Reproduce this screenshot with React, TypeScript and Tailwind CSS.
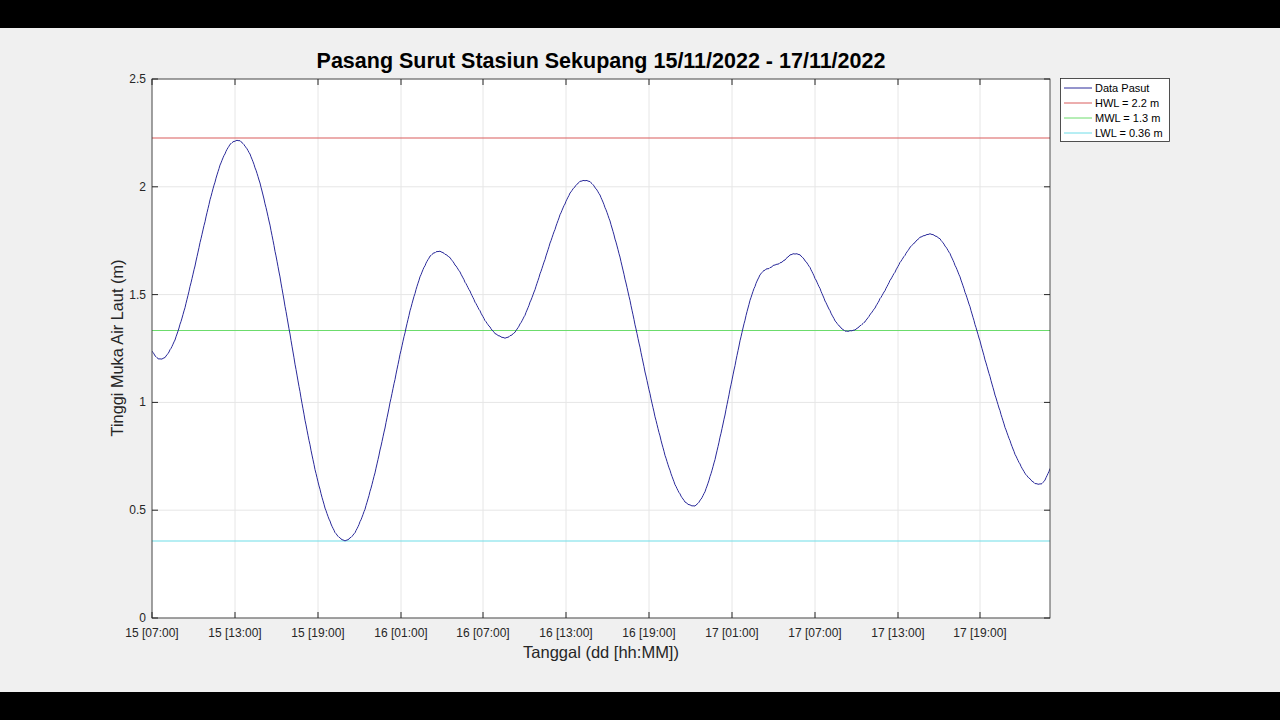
import React from "react";

const ext: [number, number][] = [
  [148, 1.25], [160, 1.2], [237, 2.215], [345, 0.36], [438, 1.7], [505, 1.3],
  [585, 2.03], [693, 0.52], [768, 1.62], [776, 1.64], [795, 1.69], [848, 1.33],
  [930, 1.78], [1040, 0.62], [1056, 0.72],
];
const Y = (v: number) => 618 - v * 215.6;

function curve() {
  const pts: string[] = [];
  for (let i = 0; i < ext.length - 1; i++) {
    const [x0, v0] = ext[i];
    const [x1, v1] = ext[i + 1];
    for (let x = Math.ceil(x0); x < x1; x += 1) {
      const t = (x - x0) / (x1 - x0);
      const s = (1 - Math.cos(Math.PI * t)) / 2;
      const jitter = ((x * 7919) % 5 === 0 ? 0.6 : 0) * (x % 2 ? 1 : -1);
      pts.push(`${x},${(Y(v0 + (v1 - v0) * s) + jitter).toFixed(1)}`);
    }
  }
  return "M" + pts.join("L");
}

const xt = [152, 235, 318, 401, 483, 566, 649, 732, 815, 898, 980];
const xl = ["15 [07:00]", "15 [13:00]", "15 [19:00]", "16 [01:00]", "16 [07:00]", "16 [13:00]", "16 [19:00]", "17 [01:00]", "17 [07:00]", "17 [13:00]", "17 [19:00]"];
const yv = [0, 0.5, 1, 1.5, 2, 2.5];

export default function App() {
  return (
    <div className="w-[1280px] h-[720px] bg-black flex flex-col" style={{ fontFamily: "Liberation Sans, Arial, sans-serif" }}>
      <div className="h-[28px]" />
      <div className="h-[664px] bg-[#f0f0f0]">
        <svg width="1280" height="664" viewBox="0 28 1280 664">
          <defs>
            <clipPath id="c"><rect x="152" y="79" width="898" height="539" /></clipPath>
          </defs>
          <rect x="152" y="79" width="898" height="539" fill="#fff" />
          {xt.map((x) => <line key={x} x1={x} x2={x} y1={79} y2={618} stroke="#e6e6e6" />)}
          {yv.map((v) => <line key={v} x1={152} x2={1050} y1={Y(v)} y2={Y(v)} stroke="#e6e6e6" />)}
          <g clipPath="url(#c)">
            <line x1={152} x2={1050} y1={138} y2={138} stroke="#d95c5c" strokeWidth="1.2" />
            <line x1={152} x2={1050} y1={330.5} y2={330.5} stroke="#6cdc6c" strokeWidth="1.2" />
            <line x1={152} x2={1050} y1={541} y2={541} stroke="#6fdde8" strokeWidth="1.2" />
            <path d={curve()} fill="none" stroke="#2a2a9a" strokeWidth="1" />
          </g>
          <rect x="152" y="79" width="898" height="539" fill="none" stroke="#262626" strokeWidth="0.8" />
          {xt.map((x, i) => (
            <g key={x}>
              <line x1={x} x2={x} y1={618} y2={612} stroke="#262626" />
              <line x1={x} x2={x} y1={79} y2={85} stroke="#262626" />
              <text x={x} y={637} fontSize="12" textAnchor="middle" fill="#262626">{xl[i]}</text>
            </g>
          ))}
          {yv.map((v) => (
            <g key={v}>
              <line x1={152} x2={158} y1={Y(v)} y2={Y(v)} stroke="#262626" />
              <line x1={1044} x2={1050} y1={Y(v)} y2={Y(v)} stroke="#262626" />
              <text x={146} y={Y(v) + 4} fontSize="12" textAnchor="end" fill="#262626">{v === 0 ? "0" : String(v)}</text>
            </g>
          ))}
          <text x={601} y={68} fontSize="21.5" fontWeight="bold" textAnchor="middle" fill="#000">Pasang Surut Stasiun Sekupang 15/11/2022 - 17/11/2022</text>
          <text x={601} y={658} fontSize="16.5" textAnchor="middle" fill="#262626">Tanggal (dd [hh:MM])</text>
          <text transform="translate(123 348) rotate(-90)" fontSize="16.3" textAnchor="middle" fill="#262626">Tinggi Muka Air Laut (m)</text>
          <rect x="1060.5" y="78.5" width="109" height="63" fill="#fff" stroke="#262626" strokeWidth="0.8" />
          {[["Data Pasut", "#2a2a9a"], ["HWL = 2.2 m", "#d95c5c"], ["MWL = 1.3 m", "#6cdc6c"], ["LWL = 0.36 m", "#6fdde8"]].map(([t, c], i) => (
            <g key={t}>
              <line x1={1064} x2={1092} y1={88 + i * 15} y2={88 + i * 15} stroke={c} />
              <text x={1095} y={92 + i * 15} fontSize="11" fill="#000">{t}</text>
            </g>
          ))}
        </svg>
      </div>
      <div className="h-[28px]" />
    </div>
  );
}
